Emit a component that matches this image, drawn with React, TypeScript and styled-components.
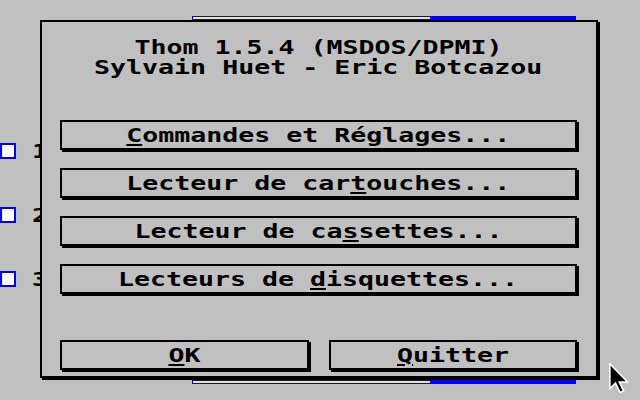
import React from "react";
import styled, { createGlobalStyle } from "styled-components";

const GlobalStyle = createGlobalStyle`
  html, body {
    margin: 0;
    padding: 0;
    background: #c0c0c0;
    overflow: hidden;
  }
`;

const Desktop = styled.div`
  position: relative;
  width: 640px;
  height: 400px;
  overflow: hidden;
  background: #c0c0c0;
  color: #000;
  font-family: "DejaVu Sans Mono", "Liberation Mono", monospace;
  font-weight: bold;
  font-size: 19px;
  line-height: 20px;
`;

const Glyphs = styled.span<{ $origin?: string }>`
  display: inline-block;
  white-space: pre;
  font-family: "DejaVu Sans Mono", "Liberation Mono", monospace;
  font-weight: bold;
  font-size: 19px;
  line-height: 20px;
  transform: scaleX(1.399);
  transform-origin: ${(p) => p.$origin || "center"} center;
`;

const Key = styled.span`
  text-decoration: underline;
  text-decoration-thickness: 2px;
  text-underline-offset: 2px;
`;

const BackList = styled.div`
  display: flex;
  flex-direction: column;
  gap: 48px;
  padding-top: 143px;
`;

const BackRow = styled.div`
  display: flex;
  align-items: center;
  gap: 16px;
  height: 16px;
`;

const CheckBox = styled.div`
  box-sizing: border-box;
  flex: none;
  width: 16px;
  height: 16px;
  border: 2px solid #0000ff;
  background: #ffffff;
`;

const BackWindow = styled.div`
  position: absolute;
  left: 192px;
  top: 16px;
  width: 384px;
  height: 368px;
  display: flex;
  flex-direction: column;
  justify-content: space-between;
`;

const Bar = styled.div`
  box-sizing: border-box;
  height: 4px;
  border: 1px solid #0000ff;
  background: #0000ff;
`;

const BarFill = styled.div`
  height: 100%;
  background: #ffff00;
`;

const Dialog = styled.div`
  position: absolute;
  left: 40px;
  top: 20px;
  box-sizing: border-box;
  width: 558px;
  height: 358px;
  border: 2px solid #000;
  box-shadow: 2px 2px 0 #000;
  background: #c0c0c0;
  display: flex;
  flex-direction: column;
  padding: 15px 19px 6px 18px;
`;

const Title = styled.div`
  display: flex;
  flex-direction: column;
  align-items: center;
  margin-bottom: 43px;
`;

const Menu = styled.div`
  display: flex;
  flex-direction: column;
  gap: 18px;
`;

const Button = styled.button`
  box-sizing: border-box;
  width: 100%;
  height: 30px;
  margin: 0;
  padding: 0 0 1px 0;
  border: 2px solid #000;
  box-shadow: 2px 2px 0 #000;
  background: #c0c0c0;
  color: #000;
  display: flex;
  align-items: center;
  justify-content: center;
  font: inherit;
  cursor: default;
`;

const Footer = styled.div`
  margin-top: auto;
  display: grid;
  grid-template-columns: 1fr 1fr;
  gap: 20px;
`;

const Pointer = styled.svg`
  position: absolute;
  left: 609px;
  top: 363px;
`;

type Item = { before: string; key: string; after: string };

const items: Item[] = [
  { before: "", key: "C", after: "ommandes et Réglages..." },
  { before: "Lecteur de car", key: "t", after: "ouches..." },
  { before: "Lecteur de ca", key: "s", after: "settes..." },
  { before: "Lecteurs de ", key: "d", after: "isquettes..." },
];

const progress = 237;

export default function App() {
  return (
    <>
      <GlobalStyle />
      <Desktop>
        <BackList>
          {["1", "2", "3"].map((n) => (
            <BackRow key={n}>
              <CheckBox />
              <Glyphs $origin="left">{n}</Glyphs>
            </BackRow>
          ))}
        </BackList>

        <BackWindow>
          <Bar>
            <BarFill style={{ width: progress }} />
          </Bar>
          <Bar>
            <BarFill style={{ width: progress }} />
          </Bar>
        </BackWindow>

        <Dialog>
          <Title>
            <Glyphs>Thom 1.5.4 (MSDOS/DPMI)</Glyphs>
            <Glyphs>Sylvain Huet - Eric Botcazou</Glyphs>
          </Title>
          <Menu>
            {items.map((it) => (
              <Button key={it.after}>
                <Glyphs>
                  {it.before}
                  <Key>{it.key}</Key>
                  {it.after}
                </Glyphs>
              </Button>
            ))}
          </Menu>
          <Footer>
            <Button>
              <Glyphs>
                <Key>O</Key>K
              </Glyphs>
            </Button>
            <Button>
              <Glyphs>
                <Key>Q</Key>uitter
              </Glyphs>
            </Button>
          </Footer>
        </Dialog>

        <Pointer width="21" height="31" viewBox="0 0 13 20" preserveAspectRatio="none">
          <path
            d="M0.5 0.5 L0.5 16.5 L4 13 L6.8 19 L9 18 L6.4 12.2 L11.5 12.2 Z"
            fill="#000"
            stroke="#fff"
            strokeWidth="1"
            strokeLinejoin="miter"
          />
        </Pointer>
      </Desktop>
    </>
  );
}
